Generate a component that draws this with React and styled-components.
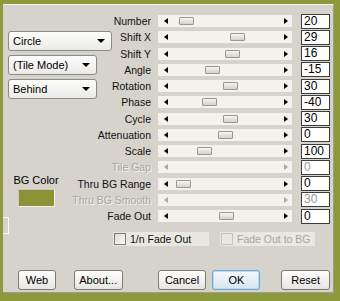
import React from 'react';
import styled, { createGlobalStyle } from 'styled-components';

const GlobalStyle = createGlobalStyle`
  html, body {
    margin: 0;
    padding: 0;
    background: #8c9a3c;
  }
  body {
    width: 340px;
    height: 301px;
    overflow: hidden;
    font-family: "Liberation Sans", Arial, sans-serif;
    font-size: 11px;
    color: #000;
  }
`;

const Panel = styled.div`
  margin: 4px 6px 0 3px;
  padding: 8px 3px 2px 5px;
  background: #d6d3cc;
  border-top: 1px solid #eef2f6;
  border-right: 1px solid #9e9b93;
  border-bottom: 1px solid #9e9b93;
  display: flex;
  flex-direction: column;
`;

const Top = styled.div`
  display: flex;
  align-items: flex-start;
`;

const LeftCol = styled.div`
  width: 106px;
  display: flex;
  flex-direction: column;
  align-items: flex-start;
  padding-top: 18px;
`;

const Dropdown = styled.div`
  box-sizing: border-box;
  width: ${p => p.$w}px;
  height: 20px;
  margin-bottom: 4px;
  padding: 0 6px 0 4px;
  display: flex;
  align-items: center;
  justify-content: space-between;
  border: 1px solid #8a8a86;
  border-radius: 3px;
  background: linear-gradient(#fdfdfc, #ebeae6);
  font-size: 11px;
`;

const DownArrow = styled.span`
  width: 0;
  height: 0;
  border-left: 4px solid transparent;
  border-right: 4px solid transparent;
  border-top: 4px solid #000;
`;

const ColorGroup = styled.div`
  width: 56px;
  margin-top: 71px;
  display: flex;
  flex-direction: column;
  align-items: center;
  gap: 2px;
`;

const ColorLabel = styled.span`
  font-size: 11px;
  line-height: 13px;
`;

const Swatch = styled.div`
  box-sizing: border-box;
  width: 37px;
  height: 18px;
  background: #8a9436;
  border: 1px solid #f4f2ea;
  border-top-color: #c9c6bd;
  border-left-color: #c9c6bd;
`;

const Bracket = styled.div`
  margin: 10px 0 -20px -5px;
  width: 5px;
  height: 15px;
  border: 1px solid #fbfbf5;
  border-left: none;
`;

const Sliders = styled.div`
  display: grid;
  grid-template-rows: repeat(13, 16.25px);
`;

const Row = styled.div`
  display: grid;
  grid-template-columns: 37px 134px 29px;
  column-gap: 7px;
  align-items: center;
  & > *:nth-child(3) {
    margin-left: 2px;
  }
`;

const Label = styled.div`
  display: flex;
  justify-content: flex-end;
  white-space: nowrap;
  font-size: 10.5px;
  line-height: 14px;
  color: ${p => (p.$off ? '#aaa79f' : '#111')};
  text-shadow: ${p => (p.$off ? '1px 1px 0 #f4f3ef' : 'none')};
`;

const Track = styled.div`
  position: relative;
  height: 12px;
  background: #f3f2ee;
  display: flex;
  align-items: center;
  justify-content: space-between;
  padding: 0 4px 0 6px;
`;

const Arrow = styled.span`
  width: 0;
  height: 0;
  border-top: 3px solid transparent;
  border-bottom: 3px solid transparent;
  ${p => (p.$dir === 'left' ? 'border-right' : 'border-left')}: 4px solid ${p => (p.$off ? '#a8a8a8' : '#000')};
`;

const Thumb = styled.div`
  position: absolute;
  top: 2px;
  box-sizing: border-box;
  width: 15px;
  height: 8px;
  border: 1px solid #9a9892;
  border-radius: 1px;
  background: linear-gradient(#f6f6f4, #d2d1cc);
`;

const Field = styled.div`
  box-sizing: border-box;
  width: 29px;
  height: 15px;
  padding-left: 2px;
  border: 1px solid #3c3c3c;
  background: #fff;
  font-size: 12px;
  line-height: 13px;
  color: ${p => (p.$off ? '#9a9a9a' : '#000')};
`;

const CheckRow = styled.div`
  display: flex;
  gap: 11px;
  margin: 8px 0 0 105px;
`;

const CheckItem = styled.label`
  box-sizing: border-box;
  width: ${p => p.$w}px;
  height: 14px;
  display: flex;
  align-items: center;
  gap: 4px;
  padding-left: 1px;
  white-space: nowrap;
  background: #e9e7e2;
  color: ${p => (p.$off ? '#a8a59e' : '#111')};
  font-size: 10.5px;
`;

const Box = styled.span`
  box-sizing: border-box;
  flex: none;
  width: 12px;
  height: 12px;
  border: 1px solid ${p => (p.$off ? '#c4c2bc' : '#7d7b76')};
  background: ${p => (p.$off ? '#e9e7e2' : 'linear-gradient(135deg, #dcdbd6, #fbfbf9)')};
`;

const ButtonRow = styled.div`
  display: flex;
  margin-top: 24px;
`;

const Button = styled.div`
  box-sizing: border-box;
  width: ${p => p.$w}px;
  height: 20px;
  margin-left: ${p => p.$gap}px;
  display: flex;
  align-items: center;
  justify-content: center;
  border: 1px solid ${p => (p.$focus ? '#6fa7d6' : '#7c7b77')};
  border-radius: 3px;
  background: ${p =>
    p.$focus
      ? 'linear-gradient(#f4f9fd, #d8e6f1)'
      : 'linear-gradient(#fefefe, #e6e5e0)'};
  box-shadow: ${p => (p.$focus ? 'inset 0 0 0 1px #b9dcf4' : 'none')};
  font-size: 11px;
`;

const rows = [
  { label: 'Number', value: '20', thumb: 21 },
  { label: 'Shift X', value: '29', thumb: 72 },
  { label: 'Shift Y', value: '16', thumb: 67 },
  { label: 'Angle', value: '-15', thumb: 47 },
  { label: 'Rotation', value: '30', thumb: 65 },
  { label: 'Phase', value: '-40', thumb: 44 },
  { label: 'Cycle', value: '30', thumb: 65 },
  { label: 'Attenuation', value: '0', thumb: 60 },
  { label: 'Scale', value: '100', thumb: 39 },
  { label: 'Tile Gap', value: '0', off: true },
  { label: 'Thru BG Range', value: '0', thumb: 18 },
  { label: 'Thru BG Smooth', value: '30', off: true },
  { label: 'Fade Out', value: '0', thumb: 61 },
];

export default function App() {
  return (
    <>
      <GlobalStyle />
      <Panel>
        <Top>
          <LeftCol>
            <Dropdown $w={104}>Circle<DownArrow /></Dropdown>
            <Dropdown $w={89}>(Tile Mode)<DownArrow /></Dropdown>
            <Dropdown $w={89}>Behind<DownArrow /></Dropdown>
            <ColorGroup>
              <ColorLabel>BG Color</ColorLabel>
              <Swatch />
            </ColorGroup>
            <Bracket />
          </LeftCol>
          <Sliders>
            {rows.map(r => (
              <Row key={r.label}>
                <Label $off={r.off}>{r.label}</Label>
                <Track>
                  <Arrow $dir="left" $off={r.off} />
                  {r.thumb !== undefined && <Thumb style={{ left: r.thumb }} />}
                  <Arrow $dir="right" $off={r.off} />
                </Track>
                <Field $off={r.off}>{r.value}</Field>
              </Row>
            ))}
          </Sliders>
        </Top>
        <CheckRow>
          <CheckItem $w={96}><Box />1/n Fade Out</CheckItem>
          <CheckItem $w={95} $off><Box $off />Fade Out to BG</CheckItem>
        </CheckRow>
        <ButtonRow>
          <Button $w={38} $gap={10}>Web</Button>
          <Button $w={49} $gap={18}>About...</Button>
          <Button $w={49} $gap={35}>Cancel</Button>
          <Button $w={48} $gap={6} $focus>OK</Button>
          <Button $w={49} $gap={21}>Reset</Button>
        </ButtonRow>
      </Panel>
    </>
  );
}
